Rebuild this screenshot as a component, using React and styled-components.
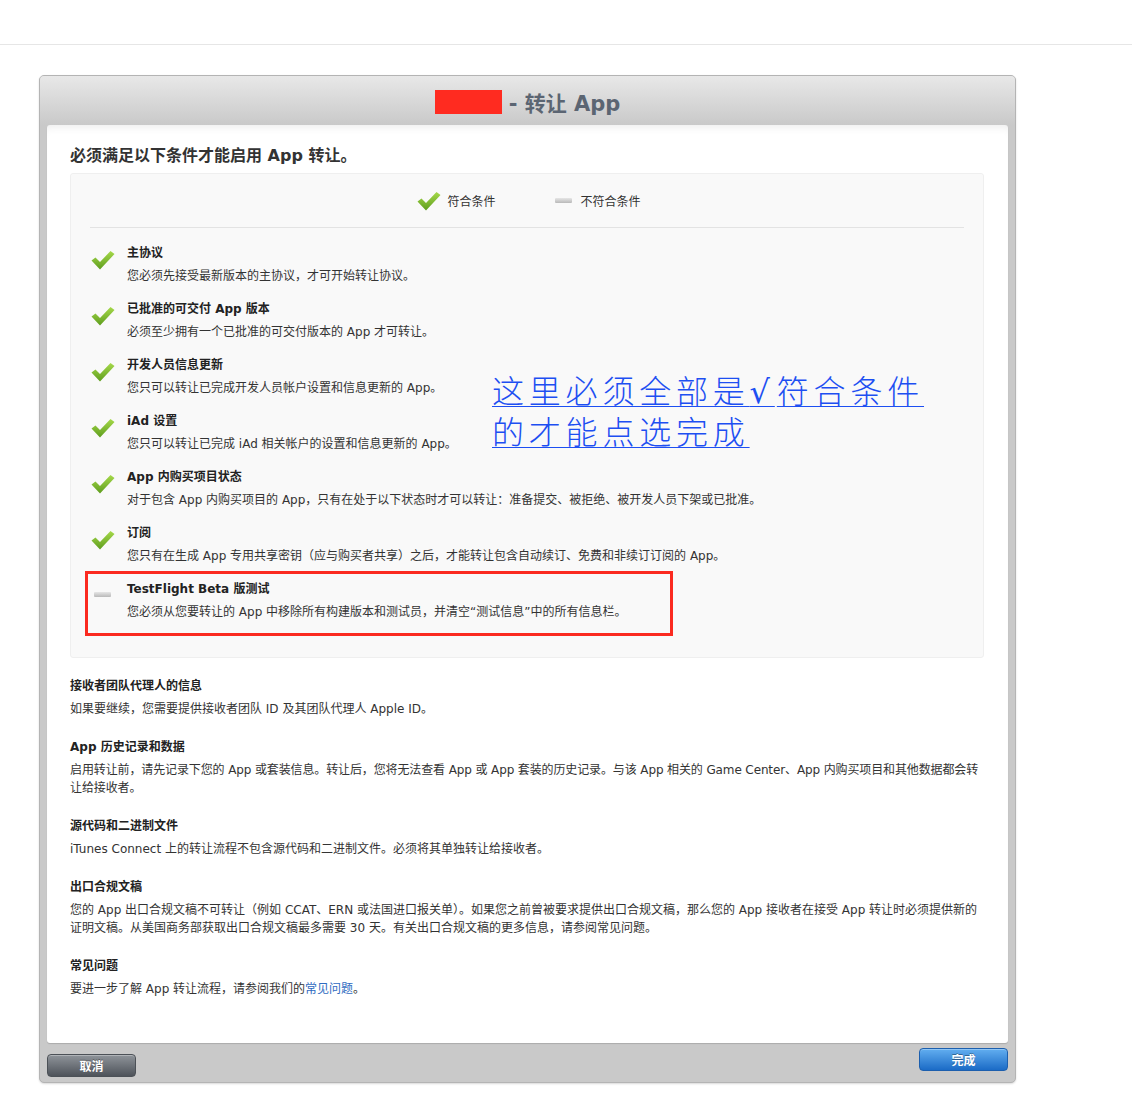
import React from 'react'
import styled, { createGlobalStyle } from 'styled-components'

const GlobalStyle = createGlobalStyle`
  body {
    margin: 0;
    background: #fff;
    font-family: "DejaVu Sans", "Noto Sans CJK SC", sans-serif;
    color: #333;
  }
`

const conditions = [
  { ok: true, title: '主协议', desc: '您必须先接受最新版本的主协议，才可开始转让协议。' },
  { ok: true, title: '已批准的可交付 App 版本', desc: '必须至少拥有一个已批准的可交付版本的 App 才可转让。' },
  { ok: true, title: '开发人员信息更新', desc: '您只可以转让已完成开发人员帐户设置和信息更新的 App。' },
  { ok: true, title: 'iAd 设置', desc: '您只可以转让已完成 iAd 相关帐户的设置和信息更新的 App。' },
  { ok: true, title: 'App 内购买项目状态', desc: '对于包含 App 内购买项目的 App，只有在处于以下状态时才可以转让：准备提交、被拒绝、被开发人员下架或已批准。' },
  { ok: true, title: '订阅', desc: '您只有在生成 App 专用共享密钥（应与购买者共享）之后，才能转让包含自动续订、免费和非续订订阅的 App。' },
  { ok: false, title: 'TestFlight Beta 版测试', desc: '您必须从您要转让的 App 中移除所有构建版本和测试员，并清空“测试信息”中的所有信息栏。' },
]

function Check() {
  return (
    <svg width="24" height="20" viewBox="0 0 24 20">
      <defs>
        <linearGradient id="chk" x1="0" y1="0" x2="0" y2="1">
          <stop offset="0" stopColor="#a6d94a" />
          <stop offset="1" stopColor="#5e9d1e" />
        </linearGradient>
      </defs>
      <path d="M0.5 10.5 L4.5 7.5 L9 12 L19.5 1 L23.5 4 L9 19.5 Z" fill="url(#chk)" />
    </svg>
  )
}

function App() {
  return (
    <>
      <GlobalStyle />
      <TopBar />
      <Page>
        <Modal>
          <Header>
            <Redacted />
            <span>- 转让 App</span>
          </Header>
          <Panel>
            <Heading>必须满足以下条件才能启用 App 转让。</Heading>
            <Box>
              <Legend>
                <LegendItem gap={6}><Check />符合条件</LegendItem>
                <LegendItem gap={9}><Dash />不符合条件</LegendItem>
              </Legend>
              <List>
                {conditions.map((c) => (
                  <Item key={c.title}>
                    <IconCol ok={c.ok}>{c.ok ? <Check /> : <Dash />}</IconCol>
                    <div>
                      <ItemTitle>{c.title}</ItemTitle>
                      <ItemDesc>{c.desc}</ItemDesc>
                    </div>
                  </Item>
                ))}
              </List>
              <Note href="#">这里必须全部是<Tick>√</Tick>符合条件<br />的才能点选完成</Note>
              <Highlight />
            </Box>
            <Section>
              <SecTitle>接收者团队代理人的信息</SecTitle>
              <SecText>如果要继续，您需要提供接收者团队 ID 及其团队代理人 Apple ID。</SecText>
            </Section>
            <Section>
              <SecTitle>App 历史记录和数据</SecTitle>
              <SecText tight>启用转让前，请先记录下您的 App 或套装信息。转让后，您将无法查看 App 或 App 套装的历史记录。与该 App 相关的 Game Center、App 内购买项目和其他数据都会转让给接收者。</SecText>
            </Section>
            <Section>
              <SecTitle>源代码和二进制文件</SecTitle>
              <SecText>iTunes Connect 上的转让流程不包含源代码和二进制文件。必须将其单独转让给接收者。</SecText>
            </Section>
            <Section>
              <SecTitle>出口合规文稿</SecTitle>
              <SecText>您的 App 出口合规文稿不可转让（例如 CCAT、ERN 或法国进口报关单）。如果您之前曾被要求提供出口合规文稿，那么您的 App 接收者在接受 App 转让时必须提供新的证明文稿。从美国商务部获取出口合规文稿最多需要 30 天。有关出口合规文稿的更多信息，请参阅常见问题。</SecText>
            </Section>
            <Section>
              <SecTitle>常见问题</SecTitle>
              <SecText>要进一步了解 App 转让流程，请参阅我们的<Link href="#">常见问题</Link>。</SecText>
            </Section>
          </Panel>
          <Footer>
            <Button kind="cancel" offset={11}>取消</Button>
            <Button kind="done" offset={5}>完成</Button>
          </Footer>
        </Modal>
      </Page>
    </>
  )
}

export default App

const TopBar = styled.div`
  height: 44px;
  border-bottom: 1px solid #e6e6e6;
`

const Page = styled.div`
  padding: 30px 0 30px 39px;
`

const Modal = styled.div`
  width: 975px;
  border: 1px solid #b4b4b4;
  border-radius: 5px;
  background: #c9c9c9;
  box-shadow: 0 1px 2px rgba(0, 0, 0, 0.15);
  overflow: hidden;
`

const Header = styled.div`
  height: 49px;
  display: flex;
  align-items: center;
  justify-content: center;
  gap: 7px;
  padding-top: 3px;
  box-sizing: border-box;
  background: linear-gradient(#e8e8e8, #c9c9c9);
  color: #5b6572;
  font-size: 21px;
  font-weight: bold;
`

const Redacted = styled.div`
  width: 67px;
  height: 24px;
  background: #ff2b20;
`

const Panel = styled.div`
  margin: 0 7px;
  background: #fff;
  border-radius: 3px;
  padding: 21px 24px 45px 23px;
  box-shadow: inset 0 8px 8px -6px rgba(0, 0, 0, 0.08), 0 1px 1px rgba(0, 0, 0, 0.15);
`

const Heading = styled.h2`
  margin: 0 0 7px;
  font-size: 16px;
  line-height: 20px;
  font-weight: bold;
  color: #333;
`

const Box = styled.div`
  position: relative;
  background: #f9f9f9;
  border: 1px solid #efefef;
  border-radius: 3px;
  padding: 0 19px 36px;
`

const Legend = styled.div`
  height: 54px;
  display: flex;
  align-items: center;
  justify-content: center;
  gap: 59px;
  border-bottom: 1px solid #e3e3e3;
  font-size: 12px;
  padding-left: 4px;
  box-sizing: border-box;
`

const LegendItem = styled.div`
  display: flex;
  align-items: center;
  gap: ${(p) => p.gap}px;
`

const Dash = styled.span`
  display: inline-block;
  width: 17px;
  height: 5px;
  background: linear-gradient(#e6e6e6, #b9b9b9);
  border-radius: 1px;
`

const List = styled.div`
  padding: 16px 0 0 1px;
  display: flex;
  flex-direction: column;
  gap: 15px;
`

const Item = styled.div`
  display: flex;
`

const IconCol = styled.div`
  width: 36px;
  flex-shrink: 0;
  padding-top: ${(p) => (p.ok ? 6 : 12)}px;
  padding-left: ${(p) => (p.ok ? 0 : 3)}px;
  box-sizing: border-box;
  line-height: 0;
`

const ItemTitle = styled.div`
  font-size: 12px;
  line-height: 18px;
  font-weight: bold;
  color: #222;
  margin-bottom: 5px;
`

const ItemDesc = styled.div`
  font-size: 12px;
  line-height: 18px;
  color: #333;
`

const Note = styled.a`
  position: absolute;
  left: 421px;
  top: 196px;
  font-family: "Noto Sans CJK SC", sans-serif;
  font-size: 32px;
  line-height: 38px;
  letter-spacing: 4.8px;
  font-weight: 300;
  color: #1d4ff2;
  text-decoration: underline;
  text-decoration-thickness: 1px;
  text-underline-offset: 3px;
`

const Tick = styled.span`
  font-family: "DejaVu Sans", sans-serif;
  font-weight: normal;
  margin: 0 2px 0 0;
`

const Highlight = styled.div`
  position: absolute;
  left: 14px;
  top: 397px;
  width: 582px;
  height: 59px;
  border: 3px solid #fb2a20;
`

const Section = styled.div`
  margin-top: 19px;
  & + & {
    margin-top: 20px;
  }
`

const SecTitle = styled.div`
  font-size: 12px;
  line-height: 18px;
  font-weight: bold;
  color: #222;
  margin-bottom: 5px;
`

const SecText = styled.div`
  font-size: 12px;
  line-height: 18px;
  letter-spacing: ${(p) => (p.tight ? '-0.12px' : '0')};
  color: #333;
`

const Link = styled.a`
  color: #2f6bc1;
  text-decoration: none;
`

const Footer = styled.div`
  height: 39px;
  padding: 0 7px;
  display: flex;
  justify-content: space-between;
  align-items: flex-start;
`

const Button = styled.div`
  margin-top: ${(p) => p.offset}px;
  width: 89px;
  height: 23px;
  box-sizing: border-box;
  border-radius: 4px;
  display: flex;
  align-items: center;
  justify-content: center;
  font-size: 12px;
  font-weight: bold;
  color: #fff;
  text-shadow: 0 -1px 0 rgba(0, 0, 0, 0.35);
  border: 1px solid ${(p) => (p.kind === 'done' ? '#1c5fae' : '#4c5157')};
  background: ${(p) =>
    p.kind === 'done'
      ? 'linear-gradient(#62aef0, #1b6bc6)'
      : 'linear-gradient(#8f949a, #4e535a)'};
  box-shadow: inset 0 1px 0 rgba(255, 255, 255, 0.3);
`
